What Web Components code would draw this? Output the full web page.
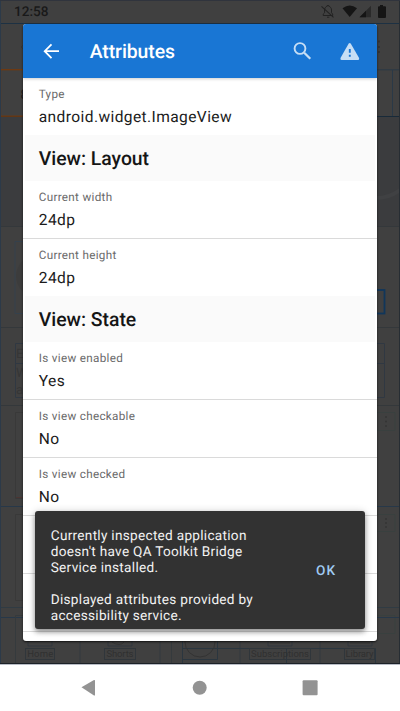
<!DOCTYPE html>
<html lang="en">
<head>
<meta charset="utf-8">
<title>Attributes</title>
<style>
html,body{margin:0;height:100%;overflow:hidden;background:#fff}
body{font-family:Roboto,"Liberation Sans",sans-serif;text-rendering:geometricPrecision}
</style>
</head>
<body>
<phone-screen>
  <inspected-app slot="backdrop"></inspected-app>
  <status-bar slot="status"></status-bar>
  <attributes-dialog slot="dialog" heading="Attributes">
    <attribute-row label="Type" value="android.widget.ImageView" last></attribute-row>
    <section-header>View: Layout</section-header>
    <attribute-row label="Current width" value="24dp"></attribute-row>
    <attribute-row label="Current height" value="24dp" last></attribute-row>
    <section-header>View: State</section-header>
    <attribute-row label="Is view enabled" value="Yes"></attribute-row>
    <attribute-row label="Is view checkable" value="No"></attribute-row>
    <attribute-row label="Is view checked" value="No"></attribute-row>
    <attribute-row></attribute-row>
    <attribute-row></attribute-row>
    <snack-bar slot="snack" action="OK">Currently inspected application<br>doesn't have QA Toolkit Bridge<br>Service installed.<br><br>Displayed attributes provided by<br>accessibility service.</snack-bar>
  </attributes-dialog>
  <nav-bar slot="nav"></nav-bar>
</phone-screen>
<script>
function define(name, render) {
  customElements.define(name, class extends HTMLElement {
    constructor() { super(); this.attachShadow({ mode: 'open' }); }
    connectedCallback() { this.shadowRoot.innerHTML = render(this); }
  });
}

define('phone-screen', () => `
<style>
:host{display:flex;flex-direction:column;width:400px;height:711px;background:#fff}
.app{position:relative;height:664px;background:#404040;overflow:hidden;display:flex;flex-direction:column}
.back{position:absolute;inset:0}
.over{position:relative;display:flex;flex-direction:column;align-items:center}
</style>
<div class="app"><div class="back"><slot name="backdrop"></slot></div>
<div class="over"><slot name="status"></slot><slot name="dialog"></slot></div></div>
<slot name="nav"></slot>`);

define('inspected-app', () => `
<style>:host{display:block}svg{display:block}text{font-family:Roboto,sans-serif}</style>
<svg width="400" height="664" viewBox="0 0 400 664" fill="none">
<rect width="400" height="664" fill="#404040"/>
<rect y="117" width="400" height="110" fill="#3b3c3e"/>
<path d="M376 198q13 0 24-8" stroke="#404143" stroke-width="4"/>
<path d="M0 .5H400" stroke="#30343d"/>
<path d="M0 23.5H400" stroke="#1d3143"/>
<path d="M27 42l-6 5 6 5" stroke="#373737"/>
<path d="M378 41.5h2M378 47h2M378 52h2" stroke="#343434" stroke-width="2"/>
<path d="M24 69.700H400" stroke="#303a43" stroke-width="1.500"/>
<path d="M392.500 70V116" stroke="#2a3947"/>
<path d="M0 116.500H400" stroke="#182a39"/>
<rect x=".5" y="69.700" width="60" height="46.500" stroke="#70390f" stroke-width="1.300"/>
<text x="20.500" y="99" font-size="13.500" fill="#191919">8</text>
<path d="M0 226.500H400M0 327.500H400M0 405.500H400" stroke="#34383b"/>
<path d="M24 241.500H15V313.500H24" stroke="#35414c"/>
<circle cx="37" cy="276" r="21" fill="#3c3c3c"/>
<rect x="350" y="290" width="34.500" height="23.500" stroke="#10365a" stroke-width="1.800"/>
<path d="M24 343.500H15.500V397.500H24M15.500 363.500H24M376 343.500h8.500v54H376M376 363.500h8.500" stroke="#303842"/>
<g fill="#363636" font-size="13"><text x="16" y="358">E</text><text x="16" y="377">W</text><text x="16" y="394">a</text></g>
<path d="M24 412.500H15.500V498.500H24M24 514.500H15.500V600.500H24" stroke="#393939"/>
<path d="M16 497.500h8" stroke="#4b3533" />
<path d="M376 412.500h19v18h-19M376 514.500h19v17h-19M376 615.500h19v18h-19" stroke="#39403f"/>
<g fill="#343434"><circle cx="386" cy="417" r="1"/><circle cx="386" cy="421.500" r="1"/><circle cx="386" cy="426" r="1"/><circle cx="386" cy="519" r="1"/><circle cx="386" cy="523" r="1"/><circle cx="386" cy="527" r="1"/></g>
<path d="M0 506.500H400M0 617.500H400" stroke="#273849"/>
<path d="M0 607.500H400" stroke="#303b43"/>
<path d="M15.500 615.500H24M15.500 615.500V664M171.500 640V664" stroke="#353a3d"/>
<path d="M80 640V664M160 640V664M240 640V664M320 640V664" stroke="#32393f"/>
<path d="M28 640v6h24v-6M108 640v6h24v-6M268 640v6h24v-6M348 640v6h24v-6" stroke="#30373e"/>
<path d="M30 640h18M112 642q8 5 12 0M270 643h20M350 643h20" stroke="#343434"/>
<path d="M182.500 640V664M217.500 640V659.500H182.500M182.500 648.500H375.500V664M286.500 648V664" stroke="#2b363f"/>
<circle cx="200" cy="642" r="15" stroke="#333"/>
<g stroke="#30363b"><rect x="25.500" y="648.500" width="29" height="11"/><rect x="104.500" y="648.500" width="31" height="11"/><rect x="249.500" y="648.500" width="61" height="11"/><rect x="344.500" y="648.500" width="30" height="11"/></g>
<g fill="#303030" font-size="9.500" text-anchor="middle"><text x="40.200" y="657" textLength="26">Home</text><text x="120" y="657" textLength="27">Shorts</text><text x="280" y="657" textLength="58">Subscriptions</text><text x="359.500" y="657" textLength="28">Library</text></g>
<path d="M.5 1V664" stroke="#2c3a49"/><path d="M399.500 1V664" stroke="#272d33"/>
<path d="M0 663.500H400" stroke="#1c2127"/>
</svg>`);

define('status-bar', () => `
<style>
:host{display:flex;align-self:stretch;height:23.500px;box-sizing:border-box;padding:1px 13px 0 14px;align-items:center;justify-content:space-between;color:#191919}
.t{font-size:13.600px;font-weight:500;letter-spacing:.020px;line-height:23px;padding-top:1px}
svg{display:block}
</style>
<span class="t">12:58</span>
<svg width="68" height="16" viewBox="319 4 68 16" fill="none">
<path d="M323.200 15.500h9.500V14l-1.200-1.200V10c0-2-1.200-3.400-2.800-3.800v-.7h-1.400v.7c-1.600.4-2.700 1.800-2.700 3.800v2.800l-1.400 1.400zM327 17.200h2.400" stroke="#222" stroke-width="1"/>
<path d="M321.500 6.300l12 11" stroke="#222" stroke-width="1.100"/>
<path d="M342.500 8.300q7.200-5.700 14.500 0L349.700 17z" fill="#151515"/>
<path d="M359.500 17.300L371 5.800V17.300z" fill="#2a2a2a"/><path d="M359.500 17.300L366 10.800V17.300z" fill="#151515"/>
<path d="M380 5h3v1.300h2q1 0 1 1V17q0 1-1 1h-6q-1 0-1-1V7.300q0-1 1-1h1z" fill="#151515"/>
</svg>`);

define('attributes-dialog', el => `
<style>
:host{display:flex;flex-direction:column;position:relative;width:353.500px;height:617px;background:#fff;border-radius:3px;box-shadow:0 1px 2px #111;overflow:hidden}
header{flex:none;display:flex;align-items:center;height:54.300px;background:#1976d4;box-shadow:0 1px 3px #0003;position:relative;z-index:1;box-sizing:border-box;padding:0 17px 0 19px}
h1{margin:0 0 0 29.500px;flex:1;color:#fff;font-size:19.400px;font-weight:500;letter-spacing:-.080px;line-height:24px;padding-top:2px}
svg{display:block;flex:none}
.gap{width:26.500px}
main{display:block}
</style>
<header>
<svg width="18" height="20" viewBox="42 41 18 20" fill="none"><path d="M59 51.200H44.700M51.500 44.300L44.700 51.200L51.500 58.100" stroke="#fff" stroke-width="1.800"/></svg>
<h1>${el.getAttribute('heading')}</h1>
<svg width="20" height="20" viewBox="293 41 20 20" fill="none" stroke="#c6def5"><circle cx="300" cy="48.500" r="5.400" stroke-width="1.900"/><path d="M304.200 52.700L310.300 58.800" stroke-width="2.300"/></svg>
<span class="gap"></span>
<svg width="20" height="20" viewBox="339.500 41 20 20"><path d="M348.200 43.500q1-1.200 2 0L358.600 58q.4 1.800-1 2H341q-1.500-.2-1-2z" fill="#c6def5"/><path d="M349.300 49v3.700M349.300 54.800v2" stroke="#1976d4" stroke-width="1.900"/></svg>
</header>
<main><slot></slot></main><slot name="snack"></slot>`);

define('attribute-row', el => `
<style>
:host{display:flex;flex-direction:column;box-sizing:border-box;height:57.900px;padding:9px 16px 0 15.500px;border-bottom:1px solid #dadada}
:host([last]){height:56.900px;border-bottom:0;padding-top:9.500px}
.l{font-size:11.700px;line-height:14px;letter-spacing:.310px;color:#6a6a6a}
.v{font-size:15.550px;line-height:20px;letter-spacing:.400px;color:#1b1b1b;margin-top:6px}
</style>
<span class="l">${el.getAttribute('label') || ''}</span><span class="v">${el.getAttribute('value') || ''}</span>`);

define('section-header', () => `
<style>
:host{display:flex;align-items:center;height:46.400px;margin:0 1.500px;padding-left:14px;padding-top:1px;box-sizing:border-box;background:#fafafa;color:#151515;font-size:19.400px;font-weight:500;letter-spacing:-.020px}
</style><slot></slot>`);

define('snack-bar', el => `
<style>
:host{position:absolute;left:12px;top:487.500px;width:329.500px;height:118px;box-sizing:border-box;display:flex;align-items:center;background:#323232;border-radius:3px;padding:0 28.500px 0 15.500px;color:#f3f3f3;font-size:13.600px;line-height:15.900px;letter-spacing:.290px;box-shadow:0 3px 5px #0005,0 1px 8px #0003}
.m{flex:1;padding-top:14px}
b{color:#a0cbf3;font-weight:500;font-size:13.600px;letter-spacing:1.100px;padding-top:4px}
</style><span class="m"><slot></slot></span><b>${el.getAttribute('action')}</b>`);

define('nav-bar', () => `
<style>
:host{display:flex;height:47px;background:#fff;align-items:center;justify-content:space-between;padding:0 82px 0 81px;box-sizing:border-box;border-top:1px solid #b9bdc6}
svg{display:block}
</style>
<svg width="16" height="18"><path d="M.5 8.300L13 1.100q1-.3 1 .5V16q0 .8-1 .5z" fill="#939393"/></svg>
<svg width="16" height="18"><circle cx="7.700" cy="8.800" r="7" fill="#939393"/></svg>
<svg width="16" height="18"><rect x=".6" y="1.200" width="15" height="15" rx="1" fill="#939393"/></svg>`);
</script>
</body>
</html>
